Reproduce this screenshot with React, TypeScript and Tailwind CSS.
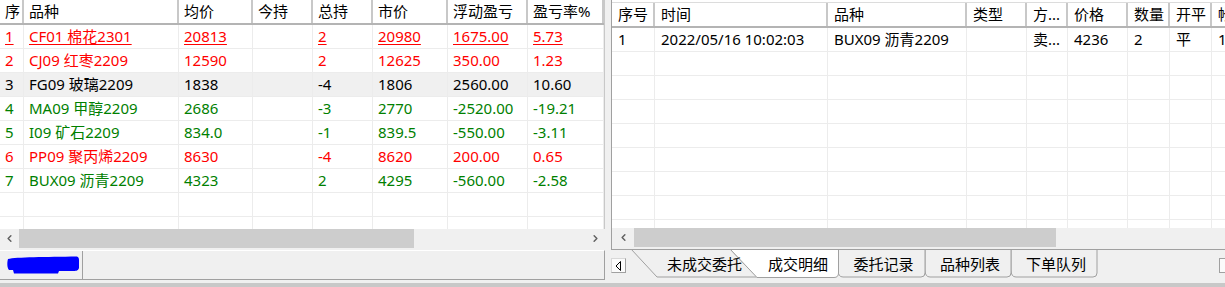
import React from "react";
import { ChevronLeft, ChevronRight } from "lucide-react";

const LEFT_COLS = [24, 155, 74, 60, 60, 75, 80, 76];
const LEFT_HEAD = ["序", "品种", "均价", "今持", "总持", "市价", "浮动盈亏", "盈亏率%"];

const RED = "text-[#ff0000]";
const GREEN = "text-[#008000]";
const BLACK = "text-black";

const POSITIONS = [
  { tone: RED, line: true, cells: ["1", "CF01 棉花2301", "20813", "", "2", "20980", "1675.00", "5.73"] },
  { tone: RED, cells: ["2", "CJ09 红枣2209", "12590", "", "2", "12625", "350.00", "1.23"] },
  { tone: BLACK, sel: true, cells: ["3", "FG09 玻璃2209", "1838", "", "-4", "1806", "2560.00", "10.60"] },
  { tone: GREEN, cells: ["4", "MA09 甲醇2209", "2686", "", "-3", "2770", "-2520.00", "-19.21"] },
  { tone: GREEN, cells: ["5", "I09 矿石2209", "834.0", "", "-1", "839.5", "-550.00", "-3.11"] },
  { tone: RED, cells: ["6", "PP09 聚丙烯2209", "8630", "", "-4", "8620", "200.00", "0.65"] },
  { tone: GREEN, cells: ["7", "BUX09 沥青2209", "4323", "", "2", "4295", "-560.00", "-2.58"] },
];

const RIGHT_COLS = [43, 173, 139, 60, 41, 60, 42, 42, 60];
const RIGHT_HEAD = ["序号", "时间", "品种", "类型", "方...", "价格", "数量", "开平", "帐号"];
const FILLS = [["1", "2022/05/16 10:02:03", "BUX09 沥青2209", "", "卖...", "4236", "2", "平", "1"]];

const TABS = [
  { label: "未成交委托", w: "w-[101px]" },
  { label: "成交明细", w: "w-[86px]" },
  { label: "委托记录", w: "w-[85px]" },
  { label: "品种列表", w: "w-[88px]" },
  { label: "下单队列", w: "w-[84px]" },
];

function HeadRow({ cols, heads, pad }: { cols: number[]; heads: string[]; pad: string }) {
  return (
    <div className="flex h-[25px] shrink-0 border-b-2 border-[#b4b4b4] bg-white">
      {cols.map((w, i) => (
        <div
          key={i}
          style={{ width: w }}
          className={`shrink-0 h-full flex items-center ${pad} border-r-2 border-[#c8c8c8] whitespace-nowrap overflow-hidden text-black`}
        >
          {heads[i]}
        </div>
      ))}
    </div>
  );
}

function BodyRow({
  cols,
  cells,
  tone,
  line,
  sel,
  pad,
}: {
  cols: number[];
  cells: string[];
  tone: string;
  line?: boolean;
  sel?: boolean;
  pad: string;
}) {
  return (
    <div className={`flex h-[24px] shrink-0 border-b border-[#ececec] ${sel ? "bg-[#f0f0f0]" : "bg-white"}`}>
      {cols.map((w, i) => (
        <div
          key={i}
          style={{ width: w }}
          className={`shrink-0 h-full flex items-center ${pad} border-r border-[#ececec] whitespace-nowrap overflow-hidden ${tone}`}
        >
          <span className={line ? "underline underline-offset-2" : ""}>{cells[i]}</span>
        </div>
      ))}
    </div>
  );
}

function BlankRows({ cols, n, pad }: { cols: number[]; n: number; pad: string }) {
  const empty = cols.map(() => "");
  return (
    <>
      {Array.from({ length: n }).map((_, i) => (
        <BodyRow key={i} cols={cols} cells={empty} tone={BLACK} pad={pad} />
      ))}
    </>
  );
}

function ScrollBar({ thumb, arrowLeft, arrowRight }: { thumb: string; arrowLeft: string; arrowRight?: boolean }) {
  return (
    <div className="flex h-[19px] shrink-0 bg-[#f0f0f0]">
      <div className={`${arrowLeft} shrink-0 flex items-center justify-center text-[#606060]`}>
        <ChevronLeft size={11} strokeWidth={3.2} />
      </div>
      <div className={`${thumb} h-full bg-[#cdcdcd] shrink-0`} />
      <div className="flex-1" />
      {arrowRight && (
        <div className="w-[19px] shrink-0 flex items-center justify-center text-[#606060]">
          <ChevronRight size={11} strokeWidth={3.2} />
        </div>
      )}
    </div>
  );
}

export default function App() {
  return (
    <div className="w-[1225px] h-[287px] overflow-hidden bg-[#f0f0f0] flex flex-col text-[15px] leading-none font-['Noto_Sans','Noto_Sans_CJK_SC',sans-serif]">
      <div className="flex h-[280px] shrink-0">
        {/* left: positions */}
        <div className="w-[605px] shrink-0 flex flex-col">
          <div className="h-[229px] shrink-0 bg-white overflow-hidden flex flex-col border-r border-[#c8c8c8]">
            <HeadRow cols={LEFT_COLS} heads={LEFT_HEAD} pad="pl-[5px]" />
            {POSITIONS.map((r, i) => (
              <BodyRow key={i} cols={LEFT_COLS} cells={r.cells} tone={r.tone} line={r.line} sel={r.sel} pad="pl-[5px]" />
            ))}
            <BlankRows cols={LEFT_COLS} n={2} pad="pl-[5px]" />
          </div>
          <ScrollBar thumb="w-[395px]" arrowLeft="w-[19px]" arrowRight />
          <div className="h-[2px] shrink-0" />
          <div className="h-[30px] shrink-0 flex border-t border-white border-b border-b-[#a0a0a0] border-r border-r-[#a0a0a0]">
            <div className="w-[83px] shrink-0 flex items-center pl-[6px] border-r border-[#a0a0a0]">
              <svg width="74" height="18" viewBox="0 0 74 18">
                <path
                  d="M2 3 C10 1 40 1 71 0.5 C73 1 73 3 73 5 L73 12 C72 15 70 15 66 15 L53 15 L52 17.5 L8 17.5 L7 14 L3 14 C1 12 1 6 2 3 Z"
                  fill="#0000ff"
                />
              </svg>
            </div>
          </div>
        </div>

        <div className="w-[6px] shrink-0" />

        {/* right: fills */}
        <div className="flex-1 flex flex-col min-w-0">
          <div className="h-[250px] shrink-0 flex flex-col border-l border-b border-[#a0a0a0]">
            <div className="h-[228px] shrink-0 bg-white overflow-hidden flex flex-col pt-[2px]">
              <div className="border-t border-[#dcdcdc]" />
              <HeadRow cols={RIGHT_COLS} heads={RIGHT_HEAD} pad="pl-[6px]" />
              {FILLS.map((c, i) => (
                <BodyRow key={i} cols={RIGHT_COLS} cells={c} tone={BLACK} pad="pl-[6px]" />
              ))}
              <BlankRows cols={RIGHT_COLS} n={8} pad="pl-[6px]" />
            </div>
            <ScrollBar thumb="w-[422px]" arrowLeft="w-[22px]" />
          </div>

          {/* sheet tabs */}
          <div className="relative h-[30px] shrink-0 flex items-start overflow-hidden">
            <svg className="absolute inset-0" width="614" height="30" viewBox="0 0 614 30">
              <path d="M20 -1 L46 27 L146 27 L119 -1" fill="#f0f0f0" stroke="#a0a0a0" strokeWidth="1" />
              <path d="M400 -1 L400 20 Q400 27 405 27 L482 27 Q486 27 486 23 L486 -1" fill="#f0f0f0" stroke="#a0a0a0" />
              <path d="M314 -1 L314 20 Q314 27 319 27 L396 27 Q400 27 400 23 L400 -1" fill="#f0f0f0" stroke="#a0a0a0" />
              <path d="M227 -1 L227 20 Q227 27 232 27 L310 27 Q314 27 314 23 L314 -1" fill="#f0f0f0" stroke="#a0a0a0" />
              <path d="M119 -1 L146 27.5 L223 27.5 Q227.5 27.5 227.5 23 L227.5 -1" fill="#ffffff" stroke="#a0a0a0" />
            </svg>
            <div className="relative mt-[8px] w-[15px] h-[15px] shrink-0 bg-[#fbfbfb] border border-[#a0a0a0] border-t-[#d8d8d8] border-l-[#d8d8d8] flex items-center justify-center">
              <svg width="7" height="10" viewBox="0 0 7 10">
                <path d="M5.5 0.5 L1 5 L5.5 9.5 Z" fill="none" stroke="#000" strokeWidth="1" />
              </svg>
            </div>
            <div className="relative flex ml-[28px] h-full">
              {TABS.map((t) => (
                <div key={t.label} className={`${t.w} shrink-0 h-[30px] flex items-center justify-center pb-[1px] text-black whitespace-nowrap`}>
                  {t.label}
                </div>
              ))}
            </div>
            <div className="relative ml-[121px] mt-[8px] w-[15px] h-[15px] shrink-0 bg-[#fbfbfb] border border-[#a0a0a0]" />
          </div>
        </div>
      </div>
      <div className="h-[3px] shrink-0 bg-[#f0f0f0]" />
      <div className="flex-1 bg-[#c8c8c8]" />
    </div>
  );
}
